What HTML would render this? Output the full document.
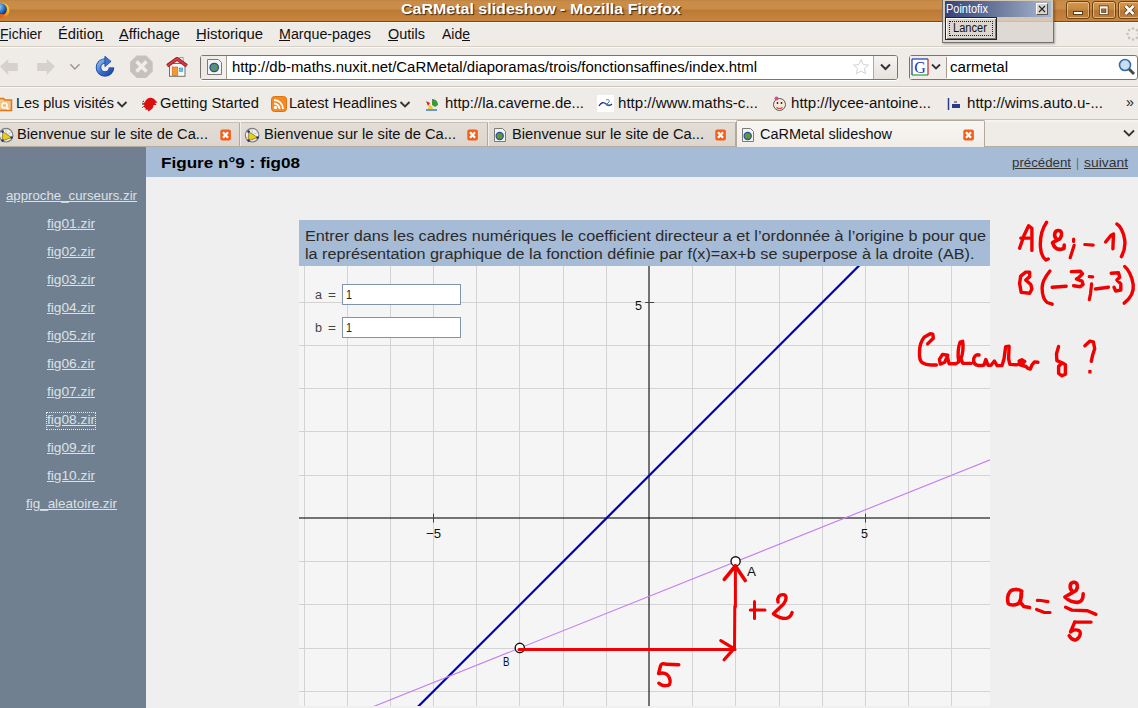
<!DOCTYPE html>
<html><head><meta charset="utf-8"><style>
html,body{margin:0;padding:0;width:1138px;height:708px;overflow:hidden;background:#efefef;}
body{position:relative;font-family:"Liberation Sans", sans-serif;}
div,span,svg{position:absolute;}
.t{white-space:nowrap;display:block;transform-origin:0 0;}
</style></head><body>
<div style="left:0px;top:0px;width:1138px;height:21px;background:linear-gradient(#b98141 0px,#c98b46 1px,#cc8d48 9px,#b87a36 10px,#c4803a 16px,#c8843b 20px,#c8843b 21px);"></div>
<div style="left:0px;top:21px;width:1138px;height:1px;background:#6e4a22;"></div>
<div style="left:0px;top:22px;width:1138px;height:1px;background:#f7f5f2;"></div>
<svg style="left:0px;top:1px;" width="12" height="20" viewBox="0 0 12 20"><defs><linearGradient id="ffo" x1="1" y1="0" x2="0" y2="1"><stop offset="0" stop-color="#ffe83a"/><stop offset="0.45" stop-color="#f8a020"/><stop offset="1" stop-color="#d61a14"/></linearGradient><radialGradient id="ffb" cx="0.35" cy="0.3" r="0.75"><stop offset="0" stop-color="#9ad6f6"/><stop offset="0.55" stop-color="#2f78c8"/><stop offset="1" stop-color="#0a2470"/></radialGradient></defs><circle cx="2" cy="9.3" r="7.4" fill="url(#ffo)"/><circle cx="0.8" cy="8.3" r="6.1" fill="url(#ffb)"/><path d="M-5 11c2 3 5 4 8 3" stroke="#e8601a" stroke-width="2.5" fill="none"/></svg>
<span class="t" style="left:401px;top:1.47px;font-family:'Liberation Sans', sans-serif;font-size:14.3px;line-height:17.16px;color:#fff;font-weight:bold;transform:scaleX(1.1189);text-shadow:1px 1px 1px #3a2510;">CaRMetal slideshow - Mozilla Firefox</span>
<div style="left:1066px;top:1px;width:24px;height:18px;border:1px solid #6a4418;border-radius:3px;box-sizing:border-box;background:linear-gradient(#d39650,#c78840 45%,#b57632 55%,#bf7e38);box-shadow:inset 0 0 0 1px rgba(255,225,180,.55);"></div>
<div style="left:1092px;top:1px;width:24px;height:18px;border:1px solid #6a4418;border-radius:3px;box-sizing:border-box;background:linear-gradient(#d39650,#c78840 45%,#b57632 55%,#bf7e38);box-shadow:inset 0 0 0 1px rgba(255,225,180,.55);"></div>
<div style="left:1118px;top:1px;width:22px;height:18px;border:1px solid #6a4418;border-radius:3px;box-sizing:border-box;background:linear-gradient(#d39650,#c78840 45%,#b57632 55%,#bf7e38);box-shadow:inset 0 0 0 1px rgba(255,225,180,.55);"></div>
<svg style="left:1066px;top:1px;" width="24" height="18" viewBox="0 0 24 18"><rect x="7.5" y="10.5" width="9" height="3" fill="#fff" stroke="#5a3a14" stroke-width="1"/></svg>
<svg style="left:1092px;top:1px;" width="24" height="18" viewBox="0 0 24 18"><rect x="8.5" y="6" width="6.5" height="6.5" fill="#a86a2a" stroke="#5a3a14" stroke-width="3"/><rect x="8.5" y="6" width="6.5" height="6.5" fill="none" stroke="#fff" stroke-width="1.4"/><path d="M8.5 6.8H15" stroke="#fff" stroke-width="1.4"/></svg>
<svg style="left:1118px;top:1px;" width="20" height="18" viewBox="0 0 20 18"><path d="M7.5 5L15.5 13M15.5 5L7.5 13" stroke="#5a3a14" stroke-width="4.4"/><path d="M7.5 5L15.5 13M15.5 5L7.5 13" stroke="#fff" stroke-width="2.6"/></svg>
<div style="left:0px;top:23px;width:1138px;height:23px;background:#efebe7;"></div>
<div style="left:0px;top:46px;width:1138px;height:1px;background:#d5cec5;"></div>
<div style="left:0px;top:47px;width:1138px;height:1px;background:#fbfaf8;"></div>
<span class="t" style="left:0px;top:25.55px;font-family:'Liberation Sans', sans-serif;font-size:14px;line-height:16.8px;color:#101010;font-weight:normal;transform:scaleX(0.9996);">Fichier</span>
<span class="t" style="left:58px;top:25.55px;font-family:'Liberation Sans', sans-serif;font-size:14px;line-height:16.8px;color:#101010;font-weight:normal;transform:scaleX(1.0511);">Édition</span>
<span class="t" style="left:119px;top:25.55px;font-family:'Liberation Sans', sans-serif;font-size:14px;line-height:16.8px;color:#101010;font-weight:normal;transform:scaleX(1.0495);">Affichage</span>
<span class="t" style="left:196px;top:25.55px;font-family:'Liberation Sans', sans-serif;font-size:14px;line-height:16.8px;color:#101010;font-weight:normal;transform:scaleX(1.0630);">Historique</span>
<span class="t" style="left:279px;top:25.55px;font-family:'Liberation Sans', sans-serif;font-size:14px;line-height:16.8px;color:#101010;font-weight:normal;transform:scaleX(1.0190);">Marque-pages</span>
<span class="t" style="left:388px;top:25.55px;font-family:'Liberation Sans', sans-serif;font-size:14px;line-height:16.8px;color:#101010;font-weight:normal;transform:scaleX(1.0336);">Outils</span>
<span class="t" style="left:442px;top:25.55px;font-family:'Liberation Sans', sans-serif;font-size:14px;line-height:16.8px;color:#101010;font-weight:normal;transform:scaleX(0.9989);">Aide</span>
<div style="left:0px;top:40px;width:8px;height:1px;background:#101010;"></div>
<div style="left:96px;top:40px;width:8px;height:1px;background:#101010;"></div>
<div style="left:119px;top:40px;width:9px;height:1px;background:#101010;"></div>
<div style="left:196px;top:40px;width:9px;height:1px;background:#101010;"></div>
<div style="left:279px;top:40px;width:11px;height:1px;background:#101010;"></div>
<div style="left:388px;top:40px;width:10px;height:1px;background:#101010;"></div>
<div style="left:462px;top:40px;width:8px;height:1px;background:#101010;"></div>
<svg style="left:1126px;top:26px;" width="14" height="16" viewBox="0 0 14 16"><circle cx="12.5" cy="8.0" r="1.3" fill="#c9c3bc"/><circle cx="10.890635480419599" cy="11.887538496079513" r="1.3" fill="#c9c3bc"/><circle cx="7.004379796909033" cy="13.49999825612509" r="1.3" fill="#c9c3bc"/><circle cx="3.1155609534899713" cy="11.893729997566377" r="1.3" fill="#c9c3bc"/><circle cx="1.5000069754985326" cy="8.008759591040677" r="1.3" fill="#c9c3bc"/><circle cx="3.1031779544424998" cy="4.118662866323378" r="1.3" fill="#c9c3bc"/><circle cx="6.986860620382451" cy="2.5000156948675514" r="1.3" fill="#c9c3bc"/><circle cx="10.878232759546325" cy="4.100088377567808" r="1.3" fill="#c9c3bc"/></svg>
<div style="left:0px;top:48px;width:1138px;height:38px;background:#efebe7;"></div>
<div style="left:0px;top:86px;width:1138px;height:1px;background:#cdc6bd;"></div>
<div style="left:0px;top:87px;width:1138px;height:1px;background:#faf9f7;"></div>
<svg style="left:0px;top:56px;" width="60" height="22" viewBox="0 0 60 22"><path d="M0 10.6L8.3 3V7H17.8V15H8.3V19Z" fill="#d6d1cb"/><path d="M37.2 7H46.7V3L55 10.6L46.7 19V15H37.2Z" fill="#d6d1cb"/></svg>
<svg style="left:68px;top:62px;" width="14" height="10" viewBox="0 0 14 10"><path d="M2.4 2.2L6.8 7L11.5 2.2" fill="none" stroke="#a39689" stroke-width="1.5"/></svg>
<svg style="left:94px;top:54px;" width="22" height="26" viewBox="0 0 22 26"><defs><linearGradient id="rlg" x1="0" y1="0" x2="1" y2="1"><stop offset="0" stop-color="#8ab8f0"/><stop offset="0.5" stop-color="#3a74d0"/><stop offset="1" stop-color="#1a4aa8"/></linearGradient></defs><path d="M11 7A6.5 6.5 0 1 0 17.5 13.5" fill="none" stroke="#1d4a9c" stroke-width="5.6"/><path d="M11 7A6.5 6.5 0 1 0 17.5 13.5" fill="none" stroke="url(#rlg)" stroke-width="3.8"/><path d="M10.9 2.2L17.1 7.4L10.9 12.7Z" fill="#3a74d0" stroke="#1d4a9c" stroke-width="0.8"/></svg>
<svg style="left:128px;top:54px;" width="28" height="26" viewBox="0 0 28 26"><path d="M8.7 1.5H18.1L24.7 8.1V17.5L18.1 24.1H8.7L2.1 17.5V8.1Z" fill="#c7c1bd"/><path d="M8.5 7.5L18.5 17.5M18.5 7.5L8.5 17.5" stroke="#f1eeea" stroke-width="3.4"/></svg>
<svg style="left:165px;top:55px;" width="24" height="24" viewBox="0 0 24 24"><rect x="4.5" y="8.5" width="15.5" height="12.8" fill="#fafafa" stroke="#707070" stroke-width="1"/><path d="M14.6 2.5h3.6v5h-3.6z" fill="#f4f4f4" stroke="#888" stroke-width="0.8"/><path d="M2.3 10.8L12 3.8L21.7 10.8" fill="none" stroke="#8a1a1a" stroke-width="3.6" stroke-linejoin="round"/><path d="M2.3 10.8L12 3.8L21.7 10.8" fill="none" stroke="#d8383e" stroke-width="2.2" stroke-linejoin="round"/><rect x="7.2" y="12" width="5.6" height="8.5" fill="#f39a2c" stroke="#c06a10" stroke-width="0.6"/><rect x="14.2" y="13" width="3.6" height="3.5" fill="#5bc6f2" stroke="#3a8ab0" stroke-width="0.5"/></svg>
<div style="left:200px;top:55px;width:698px;height:25px;background:#fff;border:1px solid #7c736a;border-radius:3px;box-sizing:border-box;box-shadow:0 1px 0 #fff;"></div>
<div style="left:201px;top:56px;width:25px;height:23px;background:linear-gradient(90deg,#ebe8e3,#f3f1ed);"></div>
<div style="left:226px;top:56px;width:1px;height:23px;background:#a89c8e;"></div>
<svg style="left:205px;top:57px;" width="20" height="20" viewBox="0 0 20 20"><path d="M2.5 2.5h11l3 3v12h-14z" fill="#f3f3f3" stroke="#7a7a7a" stroke-width="1" stroke-linejoin="round"/><circle cx="9.2" cy="10.5" r="4.2" fill="#5a9a3a" stroke="#2a4c9a" stroke-width="1.3"/><path d="M7 8.5c1 1 2 0 2.5 2s-1 2-0.5 3" stroke="#4a86d6" stroke-width="1.4" fill="none"/></svg>
<span class="t" style="left:231.5px;top:59.25px;font-family:'Liberation Sans', sans-serif;font-size:14px;line-height:16.8px;color:#000;font-weight:normal;transform:scaleX(1.0664);">http://db-maths.nuxit.net/CaRMetal/diaporamas/trois/fonctionsaffines/index.html</span>
<svg style="left:851px;top:57px;" width="20" height="20" viewBox="0 0 20 20"><path d="M10 2.5L12.2 7.6L17.5 8L13.4 11.5L14.7 16.8L10 14L5.3 16.8L6.6 11.5L2.5 8L7.8 7.6Z" fill="#fff" stroke="#d4d4d4" stroke-width="1"/></svg>
<div style="left:873px;top:56px;width:24px;height:23px;background:linear-gradient(#f6f4f1,#e6e2dc);border-left:1px solid #b2a89c;border-radius:0 2px 2px 0;box-sizing:border-box;"></div>
<svg style="left:879px;top:61px;" width="14" height="12" viewBox="0 0 14 12"><path d="M2 3.5L6.5 8L11 3.5" fill="none" stroke="#333" stroke-width="2"/></svg>
<div style="left:909px;top:55px;width:229px;height:25px;background:#fff;border:1px solid #7c736a;border-radius:3px;box-sizing:border-box;"></div>
<div style="left:910px;top:56px;width:37px;height:23px;background:#f0edea;"></div>
<div style="left:946px;top:57px;width:1px;height:21px;background:#a89c8e;"></div>
<svg style="left:911px;top:58px;" width="18" height="18" viewBox="0 0 18 18"><rect x="1" y="1" width="16" height="16" fill="#fff"/><path d="M1 1H17" stroke="#1836b8" stroke-width="1.2"/><path d="M1 1V17" stroke="#1836b8" stroke-width="1.2"/><path d="M1 17H17" stroke="#2aa32a" stroke-width="1.2"/><path d="M17 1V17" stroke="#d42020" stroke-width="1.2"/><text x="9" y="14.5" font-family="Liberation Serif" font-size="16" fill="#1836b8" text-anchor="middle">G</text></svg>
<svg style="left:930px;top:61px;" width="13" height="12" viewBox="0 0 13 12"><path d="M2 3.5L6 7.5L10 3.5" fill="none" stroke="#333" stroke-width="1.8"/></svg>
<span class="t" style="left:950px;top:59.25px;font-family:'Liberation Sans', sans-serif;font-size:14px;line-height:16.8px;color:#000;font-weight:normal;transform:scaleX(1.0803);">carmetal</span>
<svg style="left:1117px;top:57px;" width="20" height="20" viewBox="0 0 20 20"><circle cx="8" cy="8" r="5.5" fill="#c9def2" stroke="#3a6ea8" stroke-width="1.6"/><path d="M12 12L17 17" stroke="#4a4a4a" stroke-width="3"/></svg>
<div style="left:0px;top:88px;width:1138px;height:31px;background:#efebe7;"></div>
<div style="left:0px;top:119px;width:1138px;height:1px;background:#cbc2b8;"></div>
<div style="left:0px;top:120px;width:1138px;height:2px;background:#f5f3ef;"></div>
<svg style="left:0px;top:96px;" width="14" height="17" viewBox="0 0 14 17"><path d="M-1 2.5h4.5l1.5 1.5h6.5v10.5h-12.5z" fill="#f0c48a" stroke="#e07818" stroke-width="1.5"/><circle cx="4.5" cy="9.5" r="2.6" fill="none" stroke="#fff" stroke-width="1.4"/><path d="M6.5 11.5l2 2" stroke="#fff" stroke-width="1.4"/></svg>
<span class="t" style="left:16px;top:94.55px;font-family:'Liberation Sans', sans-serif;font-size:14px;line-height:16.8px;color:#101010;font-weight:normal;transform:scaleX(1.0323);">Les plus visités</span>
<span class="t" style="left:160px;top:94.55px;font-family:'Liberation Sans', sans-serif;font-size:14px;line-height:16.8px;color:#101010;font-weight:normal;transform:scaleX(1.0513);">Getting Started</span>
<span class="t" style="left:289px;top:94.55px;font-family:'Liberation Sans', sans-serif;font-size:14px;line-height:16.8px;color:#101010;font-weight:normal;transform:scaleX(1.0355);">Latest Headlines</span>
<span class="t" style="left:445px;top:94.55px;font-family:'Liberation Sans', sans-serif;font-size:14px;line-height:16.8px;color:#101010;font-weight:normal;transform:scaleX(1.0631);">http://la.caverne.de...</span>
<span class="t" style="left:618px;top:94.55px;font-family:'Liberation Sans', sans-serif;font-size:14px;line-height:16.8px;color:#101010;font-weight:normal;transform:scaleX(1.0774);">http://www.maths-c...</span>
<span class="t" style="left:791px;top:94.55px;font-family:'Liberation Sans', sans-serif;font-size:14px;line-height:16.8px;color:#101010;font-weight:normal;transform:scaleX(1.0772);">http://lycee-antoine...</span>
<span class="t" style="left:967px;top:94.55px;font-family:'Liberation Sans', sans-serif;font-size:14px;line-height:16.8px;color:#101010;font-weight:normal;transform:scaleX(1.0788);">http://wims.auto.u-...</span>
<svg style="left:115.5px;top:99px;" width="12" height="10" viewBox="0 0 12 10"><path d="M1.5 3L6 7.5L10.5 3" fill="none" stroke="#333" stroke-width="1.9"/></svg>
<svg style="left:399px;top:99px;" width="12" height="10" viewBox="0 0 12 10"><path d="M1.5 3L6 7.5L10.5 3" fill="none" stroke="#333" stroke-width="1.9"/></svg>
<svg style="left:142px;top:96px;" width="16" height="16" viewBox="0 0 16 16"><path d="M3 6c1-3 4-5 7-4c2 0.5 3 2 4 3l1.5 1.5l-2.5 0.5l1.5 2l-3 0c0 2-1 4-3 5l-2 1.5l-1-2l-2 0.5l0-2l-2-1l1-2l-2-1z" fill="#d81010"/><path d="M2 5l-1.5 1M1.5 8l-1.5 0M1.5 10.5l-1.2 1" stroke="#222" stroke-width="1"/></svg>
<svg style="left:271px;top:96px;" width="16" height="16" viewBox="0 0 16 16"><rect x="0.5" y="0.5" width="15" height="15" rx="3" fill="#f58a20" stroke="#e07010" stroke-width="1"/><circle cx="4.5" cy="11.5" r="1.7" fill="#fff"/><path d="M3 7.5a5.5 5.5 0 0 1 5.5 5.5M3 4a9 9 0 0 1 9 9" fill="none" stroke="#fff" stroke-width="1.8"/></svg>
<svg style="left:424px;top:96px;" width="16" height="16" viewBox="0 0 16 16"><path d="M2 5l4 2l-2 3z" fill="#e02020"/><path d="M8 3c3 0 6 2 6 6l-3 2l-3-2z" fill="#3a9a3a"/><path d="M5 9c2 0 4 2 4 4h-5z" fill="#f2d020"/><path d="M2 14h11" stroke="#3a7ad0" stroke-width="1.5"/></svg>
<svg style="left:597px;top:95px;" width="17" height="17" viewBox="0 0 17 17"><rect x="0" y="0" width="17" height="17" fill="#fff"/><path d="M2 11c2-4 5-4 7-2s4 2 6 0" fill="none" stroke="#2a2a9a" stroke-width="1.3"/><path d="M9 5c2-1 4 0 3 2l-3 3h5" fill="none" stroke="#4a7a9a" stroke-width="1"/></svg>
<svg style="left:771px;top:95px;" width="17" height="17" viewBox="0 0 17 17"><circle cx="8.5" cy="9.5" r="6" fill="#f6e8d8" stroke="#555" stroke-width="1"/><circle cx="5.5" cy="3.5" r="2" fill="#d84a8a"/><path d="M5.5 12.5q3 2 6 0" stroke="#c33" stroke-width="1.2" fill="none"/><circle cx="6.5" cy="8" r="0.9" fill="#222"/><circle cx="10.5" cy="8" r="0.9" fill="#222"/></svg>
<svg style="left:947px;top:96px;" width="17" height="16" viewBox="0 0 17 16"><path d="M1.5 2v12" stroke="#2a3a8a" stroke-width="1.5"/><rect x="5" y="8" width="8" height="4" fill="#2a3a8a"/><rect x="7" y="5" width="3" height="2" fill="#889"/></svg>
<span class="t" style="left:1126px;top:93.75px;font-family:'Liberation Sans', sans-serif;font-size:14px;line-height:16.8px;color:#222;font-weight:normal;transform:scaleX(1.0261);">»</span>
<div style="left:0px;top:122px;width:1138px;height:25px;background:#efebe7;"></div>
<div style="left:0px;top:146px;width:1138px;height:1px;background:#b5aca0;"></div>
<div style="left:0px;top:122px;width:240px;height:1px;background:#c8bfb3;"></div>
<div style="left:0px;top:123px;width:240px;height:23px;background:linear-gradient(#e2ddd6,#dcd6ce);"></div>
<div style="left:239px;top:123px;width:1px;height:23px;background:#b3a99b;"></div>
<div style="left:240px;top:123px;width:1px;height:23px;background:#f2efeb;"></div>
<span class="t" style="left:17px;top:125.55px;font-family:'Liberation Sans', sans-serif;font-size:14px;line-height:16.8px;color:#101010;font-weight:normal;transform:scaleX(1.0443);">Bienvenue sur le site de Ca...</span>
<svg style="left:220px;top:129px;" width="11" height="12" viewBox="0 0 11 12"><rect x="0.3" y="0.6" width="10.6" height="10.8" rx="2" fill="#f45f18"/><path d="M3 3.3L8 8.7M8 3.3L3 8.7" stroke="#fff" stroke-width="2.3"/></svg>
<div style="left:241px;top:122px;width:247px;height:1px;background:#c8bfb3;"></div>
<div style="left:241px;top:123px;width:247px;height:23px;background:linear-gradient(#e2ddd6,#dcd6ce);"></div>
<div style="left:487px;top:123px;width:1px;height:23px;background:#b3a99b;"></div>
<div style="left:488px;top:123px;width:1px;height:23px;background:#f2efeb;"></div>
<span class="t" style="left:264px;top:125.55px;font-family:'Liberation Sans', sans-serif;font-size:14px;line-height:16.8px;color:#101010;font-weight:normal;transform:scaleX(1.0498);">Bienvenue sur le site de Ca...</span>
<svg style="left:467px;top:129px;" width="11" height="12" viewBox="0 0 11 12"><rect x="0.3" y="0.6" width="10.6" height="10.8" rx="2" fill="#f45f18"/><path d="M3 3.3L8 8.7M8 3.3L3 8.7" stroke="#fff" stroke-width="2.3"/></svg>
<div style="left:489px;top:122px;width:247px;height:1px;background:#c8bfb3;"></div>
<div style="left:489px;top:123px;width:247px;height:23px;background:linear-gradient(#e2ddd6,#dcd6ce);"></div>
<div style="left:735px;top:123px;width:1px;height:23px;background:#b3a99b;"></div>
<div style="left:736px;top:123px;width:1px;height:23px;background:#f2efeb;"></div>
<span class="t" style="left:512px;top:125.55px;font-family:'Liberation Sans', sans-serif;font-size:14px;line-height:16.8px;color:#101010;font-weight:normal;transform:scaleX(1.0498);">Bienvenue sur le site de Ca...</span>
<svg style="left:715px;top:129px;" width="11" height="12" viewBox="0 0 11 12"><rect x="0.3" y="0.6" width="10.6" height="10.8" rx="2" fill="#f45f18"/><path d="M3 3.3L8 8.7M8 3.3L3 8.7" stroke="#fff" stroke-width="2.3"/></svg>
<svg style="left:-2px;top:127px;" width="16" height="16" viewBox="0 0 16 16"><circle cx="8.1" cy="8.2" r="6.8" fill="#eeeeee" stroke="#7a7a7a" stroke-width="1.1"/><path d="M8.1 1.5V15M2 11L14 5" stroke="#b0b0b0" stroke-width="0.6"/><path d="M4.6 4.6L13.6 10.6L4.6 13.6Z" fill="#e2d020" stroke="#9a7a10" stroke-width="0.8"/><circle cx="4.6" cy="4.6" r="1.3" fill="#1e3a8a"/><circle cx="13.6" cy="10.6" r="1.3" fill="#1e3a8a"/><circle cx="4.6" cy="13.6" r="1.3" fill="#1e3a8a"/></svg>
<svg style="left:244px;top:127px;" width="16" height="16" viewBox="0 0 16 16"><circle cx="8.1" cy="8.2" r="6.8" fill="#eeeeee" stroke="#7a7a7a" stroke-width="1.1"/><path d="M8.1 1.5V15M2 11L14 5" stroke="#b0b0b0" stroke-width="0.6"/><path d="M4.6 4.6L13.6 10.6L4.6 13.6Z" fill="#e2d020" stroke="#9a7a10" stroke-width="0.8"/><circle cx="4.6" cy="4.6" r="1.3" fill="#1e3a8a"/><circle cx="13.6" cy="10.6" r="1.3" fill="#1e3a8a"/><circle cx="4.6" cy="13.6" r="1.3" fill="#1e3a8a"/></svg>
<svg style="left:492px;top:127px;" width="16" height="16" viewBox="0 0 16 16"><path d="M2.5 1.5h8l3 3v10h-11z" fill="#f3f3f3" stroke="#7a7a7a" stroke-width="1" stroke-linejoin="round"/><circle cx="7.7" cy="9" r="3.6" fill="#5a9a3a" stroke="#2a4c9a" stroke-width="1.2"/></svg>
<div style="left:736px;top:120px;width:249px;height:27px;background:linear-gradient(#f8f6f3,#f0ede9);border:1px solid #b3a99b;border-bottom:none;box-sizing:border-box;border-radius:2px 2px 0 0;"></div>
<svg style="left:740px;top:127px;" width="16" height="16" viewBox="0 0 16 16"><path d="M2.5 1.5h8l3 3v10h-11z" fill="#f3f3f3" stroke="#7a7a7a" stroke-width="1" stroke-linejoin="round"/><circle cx="7.7" cy="9" r="3.6" fill="#5a9a3a" stroke="#2a4c9a" stroke-width="1.2"/></svg>
<span class="t" style="left:760px;top:125.55px;font-family:'Liberation Sans', sans-serif;font-size:14px;line-height:16.8px;color:#101010;font-weight:normal;transform:scaleX(1.0344);">CaRMetal slideshow</span>
<svg style="left:963px;top:129px;" width="11" height="12" viewBox="0 0 11 12"><rect x="0.3" y="0.6" width="10.6" height="10.8" rx="2" fill="#f45f18"/><path d="M3 3.3L8 8.7M8 3.3L3 8.7" stroke="#fff" stroke-width="2.3"/></svg>
<svg style="left:1121px;top:126px;" width="16" height="14" viewBox="0 0 16 14"><path d="M3 4.5L8 9.5L13 4.5" fill="none" stroke="#333" stroke-width="1.8"/></svg>
<div style="left:942px;top:0px;width:112px;height:43px;background:rgba(218,214,206,0.82);border:1px solid rgba(90,88,84,.8);border-top:none;box-sizing:border-box;box-shadow:1px 1px 2px rgba(0,0,0,.3);"></div>
<div style="left:945px;top:1px;width:106px;height:16px;background:linear-gradient(90deg,#34427a,#6c7a9c 50%,#a8b8d0);"></div>
<span class="t" style="left:946px;top:2.14px;font-family:'Liberation Sans', sans-serif;font-size:12px;line-height:14.4px;color:#fff;font-weight:normal;transform:scaleX(0.9124);">Pointofix</span>
<div style="left:1036px;top:3px;width:12px;height:12px;background:#d8d4cc;border:1px solid;border-color:#fff #555 #555 #fff;box-sizing:border-box;"></div>
<svg style="left:1037px;top:4px;" width="10" height="10" viewBox="0 0 10 10"><path d="M2 2L8 8M8 2L2 8" stroke="#222" stroke-width="1.1"/></svg>
<div style="left:945px;top:17px;width:52px;height:23px;background:rgba(218,214,206,0.8);border:1px solid #222;box-shadow:inset 1px 1px 0 #fff, inset -1px -1px 0 #777;box-sizing:border-box;"></div>
<div style="left:949px;top:21px;width:44px;height:15px;border:1px dotted #222;box-sizing:border-box;"></div>
<span class="t" style="left:953px;top:20.67px;font-family:'Liberation Sans', sans-serif;font-size:12.5px;line-height:15.0px;color:#111;font-weight:normal;transform:scaleX(0.8893);">Lancer</span>
<div style="left:0px;top:147px;width:146px;height:561px;background:#708090;"></div>
<div style="left:146px;top:147px;width:992px;height:30px;background:#a6bbd6;"></div>
<span class="t" style="left:161px;top:155.47px;font-family:'Liberation Sans', sans-serif;font-size:14.3px;line-height:17.16px;color:#000;font-weight:bold;transform:scaleX(1.1968);">Figure n°9 : fig08</span>
<span class="t" style="left:1012px;top:155.22px;font-family:'Liberation Sans', sans-serif;font-size:13.5px;line-height:16.2px;color:#333;font-weight:normal;transform:scaleX(0.9826);text-decoration:underline;">précédent</span>
<span class="t" style="left:1076px;top:155.22px;font-family:'Liberation Sans', sans-serif;font-size:13.5px;line-height:16.2px;color:#666;font-weight:normal;transform:scaleX(0.8533);">|</span>
<span class="t" style="left:1084px;top:155.22px;font-family:'Liberation Sans', sans-serif;font-size:13.5px;line-height:16.2px;color:#333;font-weight:normal;transform:scaleX(1.0285);text-decoration:underline;">suivant</span>
<span class="t" style="left:6px;top:188.12px;font-family:'Liberation Sans', sans-serif;font-size:13.5px;line-height:16.2px;color:#dde1e5;font-weight:normal;transform:scaleX(0.9807);text-decoration:underline;">approche_curseurs.zir</span>
<span class="t" style="left:47px;top:216.12px;font-family:'Liberation Sans', sans-serif;font-size:13.5px;line-height:16.2px;color:#dde1e5;font-weight:normal;transform:scaleX(1.0152);text-decoration:underline;">fig01.zir</span>
<span class="t" style="left:47px;top:244.12px;font-family:'Liberation Sans', sans-serif;font-size:13.5px;line-height:16.2px;color:#dde1e5;font-weight:normal;transform:scaleX(1.0152);text-decoration:underline;">fig02.zir</span>
<span class="t" style="left:47px;top:272.12px;font-family:'Liberation Sans', sans-serif;font-size:13.5px;line-height:16.2px;color:#dde1e5;font-weight:normal;transform:scaleX(1.0152);text-decoration:underline;">fig03.zir</span>
<span class="t" style="left:47px;top:300.12px;font-family:'Liberation Sans', sans-serif;font-size:13.5px;line-height:16.2px;color:#dde1e5;font-weight:normal;transform:scaleX(1.0152);text-decoration:underline;">fig04.zir</span>
<span class="t" style="left:47px;top:328.12px;font-family:'Liberation Sans', sans-serif;font-size:13.5px;line-height:16.2px;color:#dde1e5;font-weight:normal;transform:scaleX(1.0152);text-decoration:underline;">fig05.zir</span>
<span class="t" style="left:47px;top:356.12px;font-family:'Liberation Sans', sans-serif;font-size:13.5px;line-height:16.2px;color:#dde1e5;font-weight:normal;transform:scaleX(1.0152);text-decoration:underline;">fig06.zir</span>
<span class="t" style="left:47px;top:384.12px;font-family:'Liberation Sans', sans-serif;font-size:13.5px;line-height:16.2px;color:#dde1e5;font-weight:normal;transform:scaleX(1.0152);text-decoration:underline;">fig07.zir</span>
<span class="t" style="left:47px;top:412.12px;font-family:'Liberation Sans', sans-serif;font-size:13.5px;line-height:16.2px;color:#dde1e5;font-weight:normal;transform:scaleX(1.0152);text-decoration:underline;">fig08.zir</span>
<span class="t" style="left:47px;top:440.12px;font-family:'Liberation Sans', sans-serif;font-size:13.5px;line-height:16.2px;color:#dde1e5;font-weight:normal;transform:scaleX(1.0152);text-decoration:underline;">fig09.zir</span>
<span class="t" style="left:47px;top:468.12px;font-family:'Liberation Sans', sans-serif;font-size:13.5px;line-height:16.2px;color:#dde1e5;font-weight:normal;transform:scaleX(1.0152);text-decoration:underline;">fig10.zir</span>
<span class="t" style="left:26px;top:496.12px;font-family:'Liberation Sans', sans-serif;font-size:13.5px;line-height:16.2px;color:#dde1e5;font-weight:normal;transform:scaleX(0.9940);text-decoration:underline;">fig_aleatoire.zir</span>
<div style="left:46px;top:412px;width:50px;height:18px;border:1px dotted #e6e8ea;box-sizing:border-box;"></div>
<div style="left:299px;top:220px;width:691px;height:46px;background:#a6bbd6;"></div>
<span class="t" style="left:304.5px;top:227.55px;font-family:'Liberation Sans', sans-serif;font-size:14px;line-height:16.8px;color:#2a2a2a;font-weight:normal;transform:scaleX(1.1580);">Entrer dans les cadres numériques le coefficient directeur a et l’ordonnée à l’origine b pour que</span>
<span class="t" style="left:304.5px;top:245.95px;font-family:'Liberation Sans', sans-serif;font-size:14px;line-height:16.8px;color:#2a2a2a;font-weight:normal;transform:scaleX(1.1562);">la représentation graphique de la fonction définie par f(x)=ax+b se superpose à la droite (AB).</span>
<svg style="left:299px;top:266px" width="691" height="440" viewBox="0 0 691 440"><rect x="0" y="0" width="691" height="440" fill="#f5f5f5"/><line x1="5.50" y1="0" x2="5.50" y2="440" stroke="#d3d3d3" stroke-width="1"/><line x1="48.50" y1="0" x2="48.50" y2="440" stroke="#d3d3d3" stroke-width="1"/><line x1="91.50" y1="0" x2="91.50" y2="440" stroke="#d3d3d3" stroke-width="1"/><line x1="134.50" y1="0" x2="134.50" y2="440" stroke="#d3d3d3" stroke-width="1"/><line x1="177.50" y1="0" x2="177.50" y2="440" stroke="#d3d3d3" stroke-width="1"/><line x1="220.50" y1="0" x2="220.50" y2="440" stroke="#d3d3d3" stroke-width="1"/><line x1="264.50" y1="0" x2="264.50" y2="440" stroke="#d3d3d3" stroke-width="1"/><line x1="307.50" y1="0" x2="307.50" y2="440" stroke="#d3d3d3" stroke-width="1"/><line x1="393.50" y1="0" x2="393.50" y2="440" stroke="#d3d3d3" stroke-width="1"/><line x1="436.50" y1="0" x2="436.50" y2="440" stroke="#d3d3d3" stroke-width="1"/><line x1="480.50" y1="0" x2="480.50" y2="440" stroke="#d3d3d3" stroke-width="1"/><line x1="523.50" y1="0" x2="523.50" y2="440" stroke="#d3d3d3" stroke-width="1"/><line x1="566.50" y1="0" x2="566.50" y2="440" stroke="#d3d3d3" stroke-width="1"/><line x1="609.50" y1="0" x2="609.50" y2="440" stroke="#d3d3d3" stroke-width="1"/><line x1="652.50" y1="0" x2="652.50" y2="440" stroke="#d3d3d3" stroke-width="1"/><line x1="0" y1="36.50" x2="691" y2="36.50" stroke="#d3d3d3" stroke-width="1"/><line x1="0" y1="79.50" x2="691" y2="79.50" stroke="#d3d3d3" stroke-width="1"/><line x1="0" y1="122.50" x2="691" y2="122.50" stroke="#d3d3d3" stroke-width="1"/><line x1="0" y1="165.50" x2="691" y2="165.50" stroke="#d3d3d3" stroke-width="1"/><line x1="0" y1="209.50" x2="691" y2="209.50" stroke="#d3d3d3" stroke-width="1"/><line x1="0" y1="295.50" x2="691" y2="295.50" stroke="#d3d3d3" stroke-width="1"/><line x1="0" y1="338.50" x2="691" y2="338.50" stroke="#d3d3d3" stroke-width="1"/><line x1="0" y1="382.50" x2="691" y2="382.50" stroke="#d3d3d3" stroke-width="1"/><line x1="0" y1="425.50" x2="691" y2="425.50" stroke="#d3d3d3" stroke-width="1"/><line x1="0" y1="252" x2="691" y2="252" stroke="#000" stroke-opacity="0.53" stroke-width="2"/><line x1="350" y1="0" x2="350" y2="440" stroke="#000" stroke-opacity="0.53" stroke-width="2"/><line x1="134.50" y1="247.63" x2="134.50" y2="256.63" stroke="#444" stroke-width="1"/><line x1="566.50" y1="247.63" x2="566.50" y2="256.63" stroke="#444" stroke-width="1"/><line x1="346.20" y1="36.50" x2="355.20" y2="36.50" stroke="#444" stroke-width="1"/><line x1="5.16" y1="554.54" x2="695.24" y2="-135.54" stroke="#0000bb" stroke-width="2.2"/><line x1="-37.97" y1="485.53" x2="738.37" y2="175.00" stroke="#c47cf2" stroke-width="1.1"/></svg>
<span class="t" style="left:635px;top:297.70px;font-family:'Liberation Sans', sans-serif;font-size:13px;line-height:15.6px;color:#111;font-weight:normal;transform:scaleX(0.9676);">5</span>
<span class="t" style="left:426px;top:526.20px;font-family:'Liberation Sans', sans-serif;font-size:13px;line-height:15.6px;color:#111;font-weight:normal;transform:scaleX(1.0116);">−5</span>
<span class="t" style="left:861px;top:526.20px;font-family:'Liberation Sans', sans-serif;font-size:13px;line-height:15.6px;color:#111;font-weight:normal;transform:scaleX(0.9676);">5</span>
<div style="left:342px;top:284px;width:119px;height:21px;background:#fff;border:1.5px solid #8294aa;box-sizing:border-box;"></div>
<span class="t" style="left:345.5px;top:288.24px;font-family:'Liberation Sans', sans-serif;font-size:12px;line-height:14.4px;color:#222;font-weight:normal;transform:scaleX(0.8972);">1</span>
<span class="t" style="left:315px;top:287.77px;font-family:'Liberation Sans', sans-serif;font-size:12.5px;line-height:15.0px;color:#444;font-weight:normal;transform:scaleX(1.0067);">a</span>
<span class="t" style="left:328px;top:287.77px;font-family:'Liberation Sans', sans-serif;font-size:12.5px;line-height:15.0px;color:#444;font-weight:normal;transform:scaleX(1.0940);">=</span>
<div style="left:342px;top:317px;width:119px;height:21px;background:#fff;border:1.5px solid #8294aa;box-sizing:border-box;"></div>
<span class="t" style="left:345.5px;top:321.14px;font-family:'Liberation Sans', sans-serif;font-size:12px;line-height:14.4px;color:#222;font-weight:normal;transform:scaleX(0.8972);">1</span>
<span class="t" style="left:314.5px;top:320.67px;font-family:'Liberation Sans', sans-serif;font-size:12.5px;line-height:15.0px;color:#444;font-weight:normal;transform:scaleX(1.0067);">b</span>
<span class="t" style="left:328px;top:320.67px;font-family:'Liberation Sans', sans-serif;font-size:12.5px;line-height:15.0px;color:#444;font-weight:normal;transform:scaleX(1.0940);">=</span>
<svg style="left:0;top:0" width="1138" height="708" viewBox="0 0 1138 708"><circle cx="735.6" cy="561.3" r="4.6" fill="#fff" stroke="#111" stroke-width="1.4"/><circle cx="519.8" cy="647.9" r="4.6" fill="#fff" stroke="#111" stroke-width="1.4"/><path d="M519.0 649.4 L735.0 649.4" fill="none" stroke="#f00000" stroke-width="3" stroke-linecap="round" stroke-linejoin="round"/><path d="M720.8 640.6 L734.0 648.6 L724.1 659.8" fill="none" stroke="#f00000" stroke-width="3.2" stroke-linecap="round" stroke-linejoin="round"/><path d="M734.5 649.0 L734.8 606.5" fill="none" stroke="#f00000" stroke-width="3" stroke-linecap="round" stroke-linejoin="round"/><path d="M735.4 606.5 L735.4 565.5" fill="none" stroke="#f00000" stroke-width="3" stroke-linecap="round" stroke-linejoin="round"/><path d="M724.3 579.4 L735.4 566.0 L745.2 580.5" fill="none" stroke="#f00000" stroke-width="3.6" stroke-linecap="round" stroke-linejoin="round"/><path d="M754.5 601.4 L754.5 618.4" fill="none" stroke="#f00000" stroke-width="3" stroke-linecap="round" stroke-linejoin="round"/><path d="M750.3 610.0 L765.0 610.0" fill="none" stroke="#f00000" stroke-width="3" stroke-linecap="round" stroke-linejoin="round"/><path d="M778 602 C777 597 779.5 594.6 783 594.6 C787 594.6 787 600 783.6 604 L773.4 613.8 C777 616.5 782 618.5 786 618.4 C789 618 791 616 792.1 612.5" fill="none" stroke="#f00000" stroke-width="3.4" stroke-linecap="round" stroke-linejoin="round"/><path d="M678.8 664.7 L666 664.3 C663 663 661 664 660.5 666 L658.5 673.6 C661 672.8 664.5 672.8 667 674.5 C670 677 671 682 669.5 684.5 C668 686 664 686 661.3 684.9 L658.8 683.2" fill="none" stroke="#f00000" stroke-width="3.4" stroke-linecap="round" stroke-linejoin="round"/><path d="M1019.6 248.2 L1024.1 235.2 L1028.6 225.7 L1031.9 228.4 L1031.9 235.2 L1031.9 250.4" fill="none" stroke="#f00000" stroke-width="3.4" stroke-linecap="round" stroke-linejoin="round"/><path d="M1020.7 238.1 L1029.7 238.1" fill="none" stroke="#f00000" stroke-width="3.2" stroke-linecap="round" stroke-linejoin="round"/><path d="M1046.6 222.3 C1042 229 1040 238 1040.4 246.5 C1040.8 253 1043 258 1046 260 L1048.2 259" fill="none" stroke="#f00000" stroke-width="3.4" stroke-linecap="round" stroke-linejoin="round"/><path d="M1056 238.5 C1053.5 235.5 1054.5 230.5 1058.4 230.5 C1062 230.5 1062.5 235 1060.1 238.6 L1052.5 242.6 C1054 247.5 1057 249.9 1061.2 249.3 L1064 248.5 L1064.2 245.1" fill="none" stroke="#f00000" stroke-width="3.6" stroke-linecap="round" stroke-linejoin="round"/><path d="M1073.6 239.2 L1073.6 241.5" fill="none" stroke="#f00000" stroke-width="3.2" stroke-linecap="round" stroke-linejoin="round"/><path d="M1074.1 245.4 L1070.2 257.7" fill="none" stroke="#f00000" stroke-width="3.2" stroke-linecap="round" stroke-linejoin="round"/><path d="M1084.8 244.5 L1093.2 245.1" fill="none" stroke="#f00000" stroke-width="3.2" stroke-linecap="round" stroke-linejoin="round"/><path d="M1105.6 242.0 L1111.2 235.2 L1113.5 234.1 L1112.9 248.7" fill="none" stroke="#f00000" stroke-width="3.4" stroke-linecap="round" stroke-linejoin="round"/><path d="M1116.9 224 C1120 225.5 1123.5 232 1124.7 239.7 C1125.5 246 1124.5 251 1121.4 256.6" fill="none" stroke="#f00000" stroke-width="3.4" stroke-linecap="round" stroke-linejoin="round"/><path d="M1029.7 272.1 L1025.7 272.1 L1020.7 276.1 L1019.6 283.4 L1021.2 292.4 L1029.7 293.3 L1031.9 289.0 L1030.8 284.5 L1025.7 280.0 L1029.7 276.6 L1029.7 272.1" fill="none" stroke="#f00000" stroke-width="3.4" stroke-linecap="round" stroke-linejoin="round"/><path d="M1049.9 271 C1045 277 1042 283 1042.1 288 C1042.2 295 1044 300 1047.1 302.5 L1052.2 304.2" fill="none" stroke="#f00000" stroke-width="3.4" stroke-linecap="round" stroke-linejoin="round"/><path d="M1052.2 287.3 L1066.2 286.2" fill="none" stroke="#f00000" stroke-width="3.4" stroke-linecap="round" stroke-linejoin="round"/><path d="M1071.3 271.6 L1080.3 271.2 L1082.6 273.8 L1078.6 277.7 L1076.4 278.9 L1082.0 281.1 L1083.1 284.5 L1080.3 286.7 L1073.6 285.8" fill="none" stroke="#f00000" stroke-width="3.4" stroke-linecap="round" stroke-linejoin="round"/><path d="M1089.3 276.6 L1092.7 276.9" fill="none" stroke="#f00000" stroke-width="3.2" stroke-linecap="round" stroke-linejoin="round"/><path d="M1091.6 283.9 L1090.5 294.0 L1089.3 299.7" fill="none" stroke="#f00000" stroke-width="3.2" stroke-linecap="round" stroke-linejoin="round"/><path d="M1095.5 289.0 L1108.4 287.3" fill="none" stroke="#f00000" stroke-width="3.4" stroke-linecap="round" stroke-linejoin="round"/><path d="M1111.2 273.2 L1118.5 272.7 L1119.7 277.2 L1116.9 280.0 L1120.8 283.9 L1120.8 290.1 L1115.7 291.0 L1114.0 287.3" fill="none" stroke="#f00000" stroke-width="3.4" stroke-linecap="round" stroke-linejoin="round"/><path d="M1124.7 266.5 C1128 269 1132 276 1133.2 284.5 C1134 291 1132 297 1124.2 303.1" fill="none" stroke="#f00000" stroke-width="3.4" stroke-linecap="round" stroke-linejoin="round"/><path d="M927.6 343.9 L933.3 338.2 L932.8 334.2 L930.2 333.8 L924.1 337.3 C921 341 919.5 346 919.5 352 C919.2 357 920 361 922.3 362.8 C925 364.5 928 365 931 365 L936.4 365" fill="none" stroke="#f00000" stroke-width="3.4" stroke-linecap="round" stroke-linejoin="round"/><path d="M947.8 355.3 L942.5 354.4 L939.4 359.3 L940.3 364.1 L944.7 362.3 L947.3 356.6 L949.1 363.7 L955.7 363.7 L958.8 361.9 C957.5 356 958 347 960.1 342.1 L962.7 341.3 C963.5 346 963 354 961 358.4 L962.7 363.2 L969.8 363.4" fill="none" stroke="#f00000" stroke-width="3.4" stroke-linecap="round" stroke-linejoin="round"/><path d="M969.8 363.4 L971 363.4 M979 355 C975 354 973 358 973.8 362 C974.8 366 980 366 984 365 L985.8 359.5 L988.1 365.3 L991 365.3 L994.4 361 L997.1 365.6 L1002 365.5 L1004 358.9 L1005.7 346.6 L1009.1 346.2 L1008.6 358.9 L1009.9 364.4 L1015.8 364.8 L1022.6 363.6 L1024.7 361.4 L1021.8 359.7 L1019.2 361 L1020.1 364.8 L1026 366.5 L1027.7 368.2 L1030.3 369.1 L1032 364.8 L1034.5 361.9 L1037.9 362.3" fill="none" stroke="#f00000" stroke-width="3.4" stroke-linecap="round" stroke-linejoin="round"/><path d="M1058.6 346.6 L1056.5 353.8 L1056.9 360.6 L1062.0 362.7 L1065.4 364.8 L1065.4 374.2 L1062.0 375.8 L1058.6 373.3 L1058.6 366.5 L1062.0 362.7" fill="none" stroke="#f00000" stroke-width="3.4" stroke-linecap="round" stroke-linejoin="round"/><path d="M1084.9 345.8 L1090.0 341.1 L1093.4 341.9 L1094.7 348.7 L1092.5 355.5 L1091.3 361.4" fill="none" stroke="#f00000" stroke-width="3.4" stroke-linecap="round" stroke-linejoin="round"/><rect x="1088.3" y="369.9" width="3.2" height="3.6" fill="#f00000"/><path d="M1021.8 591.1 C1019 589 1012 588.5 1009.8 591.8 C1007.5 594.5 1007 600 1008.4 603.8 C1010 605.5 1016 605.5 1019 603.1 C1021 600 1021.8 596 1021.4 591.1 L1020.4 602.4 L1023.9 606.6 L1029.5 607.6" fill="none" stroke="#f00000" stroke-width="3.6" stroke-linecap="round" stroke-linejoin="round"/><path d="M1037.3 600.3 L1041.0 600.5 L1047.9 601.7" fill="none" stroke="#f00000" stroke-width="3.2" stroke-linecap="round" stroke-linejoin="round"/><path d="M1036.6 609.4 L1043.7 612.3 L1050.0 612.5" fill="none" stroke="#f00000" stroke-width="3.2" stroke-linecap="round" stroke-linejoin="round"/><path d="M1072.5 591.5 C1069.5 589 1069 583 1073.3 582.3 C1077.5 581.8 1078.5 586.5 1076.2 590.4 L1064.9 597 C1069 601 1074 602.4 1077.6 602.4 C1081 602 1083.2 599 1083.2 593.9" fill="none" stroke="#f00000" stroke-width="3.6" stroke-linecap="round" stroke-linejoin="round"/><path d="M1065.6 607.3 L1071.9 610.1 L1087.5 610.8 L1095.9 614.4" fill="none" stroke="#f00000" stroke-width="3.4" stroke-linecap="round" stroke-linejoin="round"/><path d="M1074.7 622.1 L1091.0 622.1" fill="none" stroke="#f00000" stroke-width="3.4" stroke-linecap="round" stroke-linejoin="round"/><path d="M1074.7 622.1 L1070.5 632 C1073 629.5 1077 629.8 1079 630.6 C1081 632 1081 637 1076.2 639.8 C1073 640.5 1070.5 638 1069.1 635.6" fill="none" stroke="#f00000" stroke-width="3.4" stroke-linecap="round" stroke-linejoin="round"/></svg>
<span class="t" style="left:747px;top:563.72px;font-family:'Liberation Sans', sans-serif;font-size:13.5px;line-height:16.2px;color:#111;font-weight:normal;transform:scaleX(0.9983);">A</span>
<span class="t" style="left:503px;top:654.22px;font-family:'Liberation Sans', sans-serif;font-size:13.5px;line-height:16.2px;color:#111;font-weight:normal;transform:scaleX(0.7210);">B</span>
</body></html>
